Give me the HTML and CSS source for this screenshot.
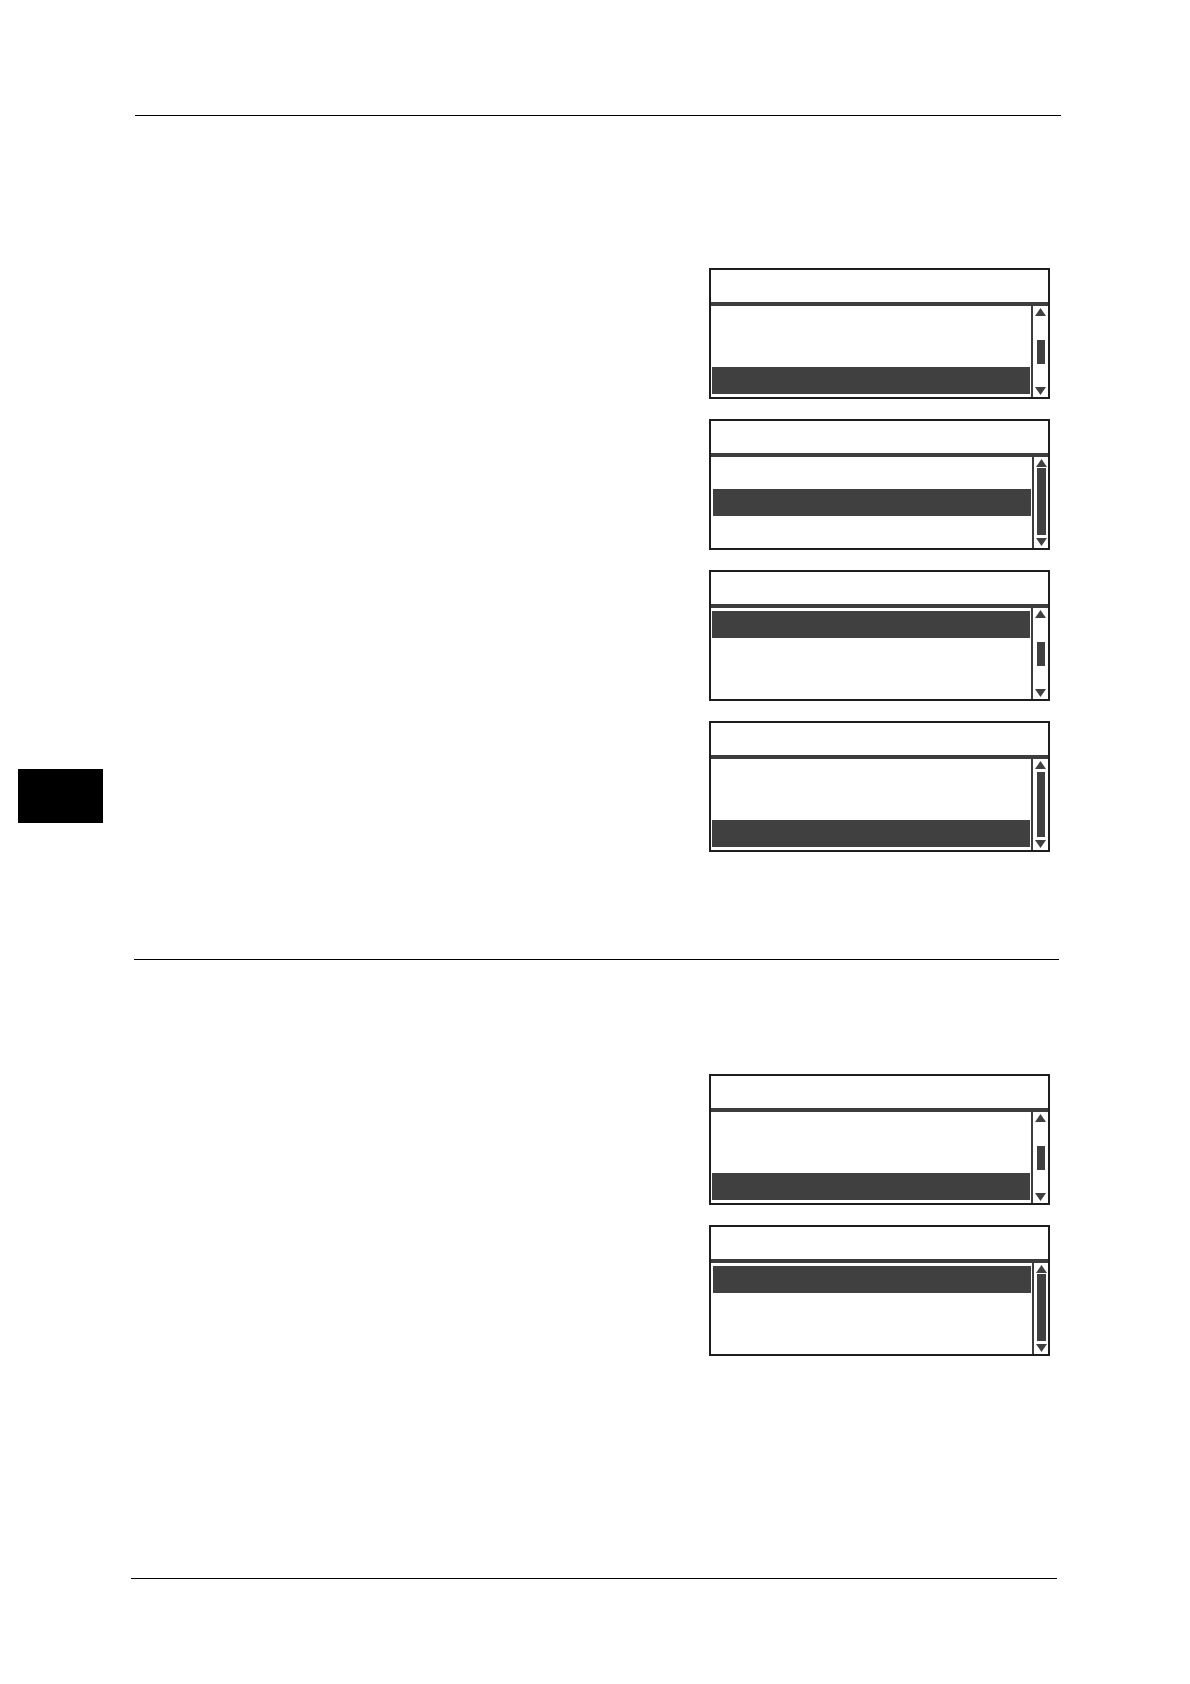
FILE: index.html
```html
<!DOCTYPE html>
<html lang="en">
<head>
<meta charset="utf-8">
<meta name="viewport" content="width=device-width, initial-scale=1">
<title>Manual page</title>
<link rel="stylesheet" href="styles.css">
</head>
<body>
<div class="page">
  <aside class="side"><div class="chapter-tab"></div></aside>
  <main class="content">
    <hr class="rule rule-top">
    <section class="screens screens-first">
      <div class="screen">
        <div class="title"></div>
        <div class="panel">
          <ul class="rows"><li></li><li></li><li class="selected"></li></ul>
          <div class="scrollbar">
            <button class="arrow" aria-label="Scroll up"><svg viewBox="0 0 11 8"><path d="M5.5 0L11 8H0Z"/></svg></button>
            <div class="track track-short"><div class="thumb"></div></div>
            <button class="arrow" aria-label="Scroll down"><svg viewBox="0 0 11 8"><path d="M0 0H11L5.500 8Z"/></svg></button>
          </div>
        </div>
      </div>
      <div class="screen">
        <div class="title"></div>
        <div class="panel panel-narrow-bar">
          <ul class="rows"><li></li><li class="selected"></li><li></li></ul>
          <div class="scrollbar">
            <button class="arrow" aria-label="Scroll up"><svg viewBox="0 0 11 8"><path d="M5.5 0L11 8H0Z"/></svg></button>
            <div class="track"><div class="thumb"></div></div>
            <button class="arrow" aria-label="Scroll down"><svg viewBox="0 0 11 8"><path d="M0 0H11L5.500 8Z"/></svg></button>
          </div>
        </div>
      </div>
      <div class="screen">
        <div class="title"></div>
        <div class="panel">
          <ul class="rows"><li class="selected"></li><li></li><li></li></ul>
          <div class="scrollbar">
            <button class="arrow" aria-label="Scroll up"><svg viewBox="0 0 11 8"><path d="M5.5 0L11 8H0Z"/></svg></button>
            <div class="track track-short"><div class="thumb"></div></div>
            <button class="arrow" aria-label="Scroll down"><svg viewBox="0 0 11 8"><path d="M0 0H11L5.500 8Z"/></svg></button>
          </div>
        </div>
      </div>
      <div class="screen">
        <div class="title"></div>
        <div class="panel">
          <ul class="rows"><li></li><li></li><li class="selected"></li></ul>
          <div class="scrollbar">
            <button class="arrow" aria-label="Scroll up"><svg viewBox="0 0 11 8"><path d="M5.5 0L11 8H0Z"/></svg></button>
            <div class="track track-inset"><div class="thumb"></div></div>
            <button class="arrow" aria-label="Scroll down"><svg viewBox="0 0 11 8"><path d="M0 0H11L5.500 8Z"/></svg></button>
          </div>
        </div>
      </div>
    </section>
    <hr class="rule rule-middle">
    <section class="screens screens-second">
      <div class="screen">
        <div class="title"></div>
        <div class="panel">
          <ul class="rows"><li></li><li></li><li class="selected"></li></ul>
          <div class="scrollbar">
            <button class="arrow" aria-label="Scroll up"><svg viewBox="0 0 11 8"><path d="M5.5 0L11 8H0Z"/></svg></button>
            <div class="track track-short"><div class="thumb"></div></div>
            <button class="arrow" aria-label="Scroll down"><svg viewBox="0 0 11 8"><path d="M0 0H11L5.500 8Z"/></svg></button>
          </div>
        </div>
      </div>
      <div class="screen">
        <div class="title"></div>
        <div class="panel panel-narrow-bar">
          <ul class="rows"><li class="selected"></li><li></li><li></li></ul>
          <div class="scrollbar">
            <button class="arrow" aria-label="Scroll up"><svg viewBox="0 0 11 8"><path d="M5.5 0L11 8H0Z"/></svg></button>
            <div class="track"><div class="thumb"></div></div>
            <button class="arrow" aria-label="Scroll down"><svg viewBox="0 0 11 8"><path d="M0 0H11L5.500 8Z"/></svg></button>
          </div>
        </div>
      </div>
    </section>
    <hr class="rule rule-bottom">
  </main>
</div>
</body>
</html>
```

FILE: styles.css
```css
*, *::before, *::after {
  box-sizing: border-box;
}

body {
  margin: 0;
  background: #fff;
  font-family: "Liberation Sans", Arial, sans-serif;
}

.page {
  display: grid;
  grid-template-columns: 131px minmax(0, 1fr);
  min-height: 100vh;
}

.side {
  padding: 769px 28px 0 18px;
}

.chapter-tab {
  height: 54px;
  background: #000;
}

.content {
  padding: 115px 0 105px;
}

.rule {
  height: 1px;
  margin: 0;
  border: 0;
  background: #000;
}

.rule-top {
  margin: 0 129px 0 4px;
}

.rule-middle {
  margin: 0 131px 0 3px;
}

.rule-bottom {
  margin: 0 133px 0 0;
}

.screens {
  display: flex;
  flex-direction: column;
  align-items: flex-end;
  gap: 20px;
  padding-right: 140px;
}

.screens-first {
  padding-top: 152px;
  padding-bottom: 107px;
}

.screens-second {
  padding-top: 114px;
  padding-bottom: 222px;
}

/* Printer display: title strip above a three-row list */
.screen {
  width: 100%;
  max-width: 341px;
  border: 2px solid #1e1c1d;
}

.title {
  height: 36px;
  border-bottom: 4px solid #3d3d3d;
}

.panel {
  display: grid;
  grid-template-columns: minmax(0, 1fr) 17px;
}

.panel-narrow-bar {
  grid-template-columns: minmax(0, 1fr) 16px;
}

.rows {
  display: grid;
  grid-auto-rows: 27px;
  gap: 2px;
  margin: 0;
  padding: 3px 1px;
  list-style: none;
}

.panel-narrow-bar .rows {
  padding-left: 2px;
}

.selected {
  background: #404040;
}

.scrollbar {
  display: flex;
  flex-direction: column;
  padding: 2px;
  border-left: 2px solid #3d3d3d;
}

.panel-narrow-bar .scrollbar {
  padding-right: 1px;
}

.arrow {
  display: block;
  width: 11px;
  height: 8px;
  padding: 0;
  border: 0;
  background: none;
}

.arrow svg {
  display: block;
  width: 11px;
  height: 8px;
  fill: #404040;
}

.track {
  display: flex;
  flex: 1;
  padding: 1px 0 3px 2px;
}

.track-inset {
  padding-top: 3px;
}

.track-short {
  padding-top: 24px;
}

.thumb {
  width: 8px;
  background: #404040;
}

.panel-narrow-bar .track {
  padding-left: 1px;
}

.panel-narrow-bar .thumb {
  width: 9px;
}

.track-short .thumb {
  height: 24px;
}
```
